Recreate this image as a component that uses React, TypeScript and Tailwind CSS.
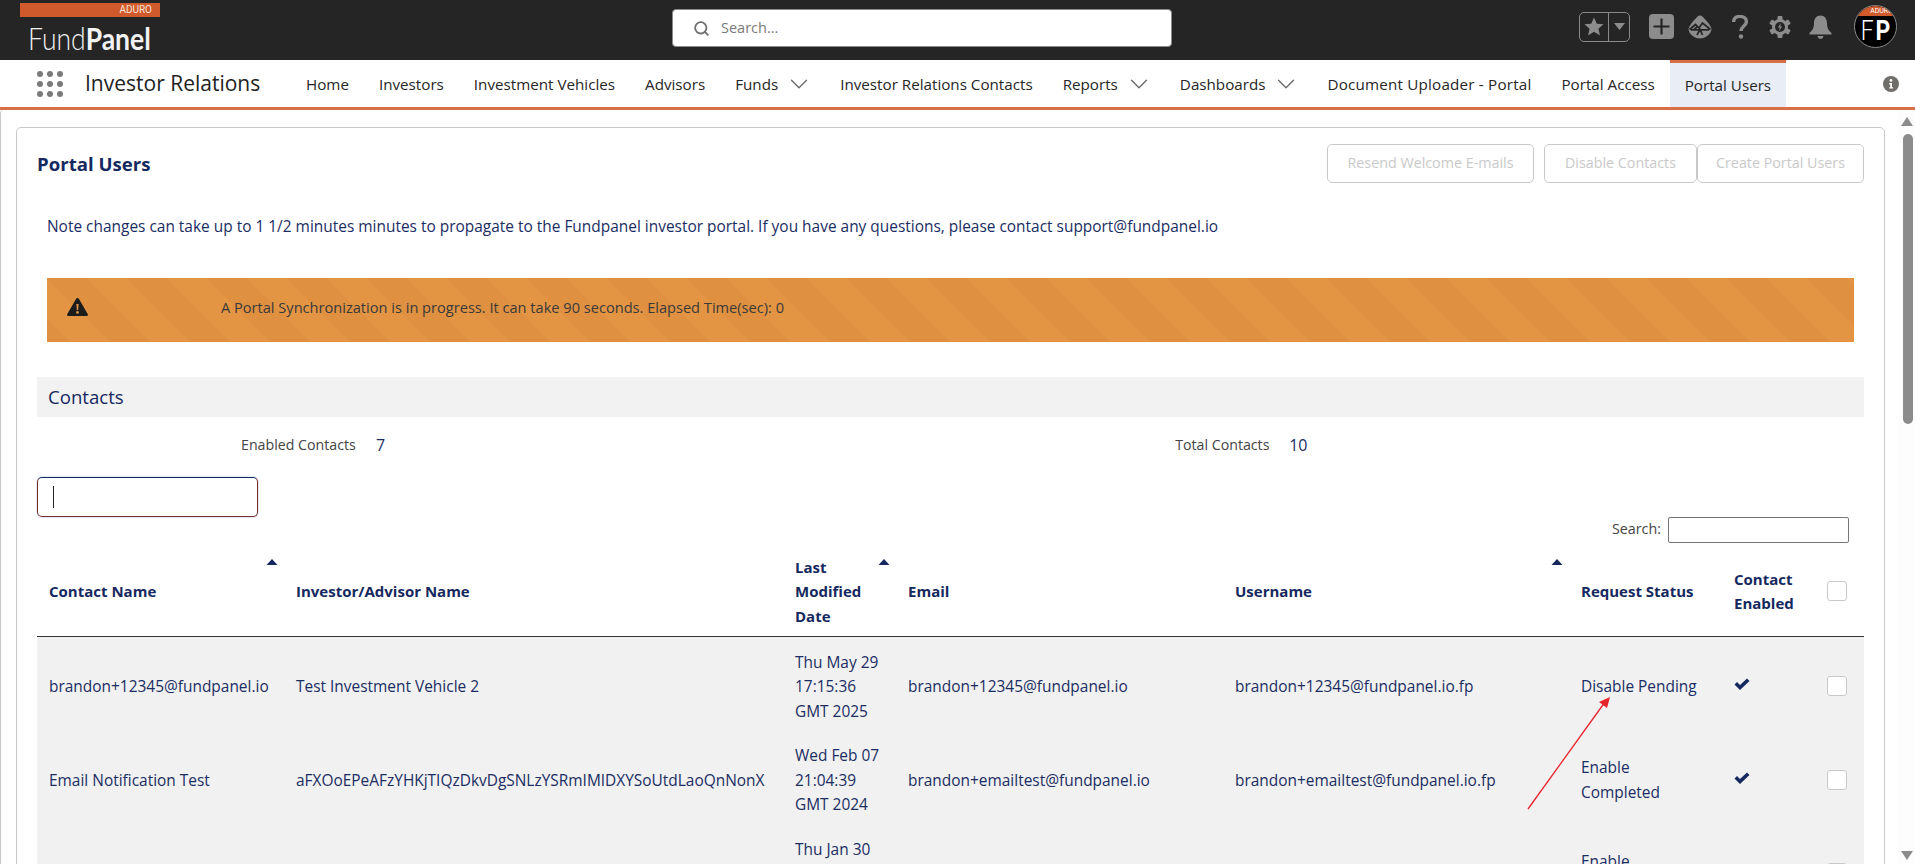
import React from 'react';
import { Search, ChevronDown } from 'lucide-react';

const navItems = [
    { label: 'Home' },
    { label: 'Investors' },
    { label: 'Investment Vehicles' },
    { label: 'Advisors' },
    { label: 'Funds', menu: true },
    { label: 'Investor Relations Contacts' },
    { label: 'Reports', menu: true },
    { label: 'Dashboards', menu: true },
    { label: 'Document Uploader - Portal', wide: true },
    { label: 'Portal Access' },
];

const rows = [
    {
        contact: 'brandon+12345@fundpanel.io',
        investor: 'Test Investment Vehicle 2',
        modified: ['Thu May 29', '17:15:36', 'GMT 2025'],
        email: 'brandon+12345@fundpanel.io',
        username: 'brandon+12345@fundpanel.io.fp',
        status: 'Disable Pending',
    },
    {
        contact: 'Email Notification Test',
        investor: 'aFXOoEPeAFzYHKjTIQzDkvDgSNLzYSRmIMIDXYSoUtdLaoQnNonX',
        modified: ['Wed Feb 07', '21:04:39', 'GMT 2024'],
        email: 'brandon+emailtest@fundpanel.io',
        username: 'brandon+emailtest@fundpanel.io.fp',
        status: 'Enable Completed',
    },
    {
        contact: 'Portal Test Contact',
        investor: 'Test Investment Vehicle 1',
        modified: ['Thu Jan 30', '15:22:10', 'GMT 2025'],
        email: 'brandon+portal@fundpanel.io',
        username: 'brandon+portal@fundpanel.io.fp',
        status: 'Enable Completed',
    },
];

const SortCaret = () => (
    <svg width="12" height="6" viewBox="0 0 12 6" className="absolute top-[14px] right-[6px] fill-[#16295f]">
        <path d="M6 0 L11.5 6 H0.5 Z" />
    </svg>
);

const CheckBox = () => <div className="w-5 h-5 bg-white border border-[#c9c9c9] rounded-[3px]" />;

const TopIcons = () => (
    <div className="flex items-center">
        <div className="flex w-[51px] h-[30px] border border-[#8a8a8a] rounded-[5px]">
            <div className="w-[29px] flex items-center justify-center border-r border-[#8a8a8a]">
                <svg width="20" height="19" viewBox="0 0 20 19" className="fill-[#8c8c8c]">
                    <path d="M10 0.5 L12.8 6.8 L19.5 7.3 L14.4 11.7 L16 18.4 L10 14.8 L4 18.4 L5.6 11.7 L0.5 7.3 L7.2 6.8 Z" />
                </svg>
            </div>
            <div className="flex-1 flex items-center justify-center">
                <svg width="11" height="7" viewBox="0 0 11 7" className="fill-[#8c8c8c]">
                    <path d="M0 0 H11 L5.5 7 Z" />
                </svg>
            </div>
        </div>
        <div className="ml-[19px] w-[25px] h-[25px] rounded-[4px] bg-[#8c8c8c] flex items-center justify-center">
            <svg width="17" height="17" viewBox="0 0 17 17" className="fill-[#252525]">
                <path d="M7.4 0.5 H9.6 V7.4 H16.5 V9.6 H9.6 V16.5 H7.4 V9.6 H0.5 V7.4 H7.4 Z" />
            </svg>
        </div>
        <svg width="24" height="24" viewBox="0 0 24 24" className="ml-[14px]">
            <path d="M12 0.5 C14 0.5 15 2 16 3.2 C18.5 5.8 22 9 23.5 13.5 C23.5 19 17.5 23.5 12 23.5 C6.5 23.5 0.5 19 0.5 13.5 C2 9 5.5 5.8 8 3.2 C9 2 10 0.5 12 0.5 Z" fill="#8c8c8c" />
            <path d="M1.5 14.5 L7.5 9.5 L11 13 L14.5 8 L22.5 14.5 M6 14.5 L9 12 M9 20 L12 14.5 L14.5 20 M3 14.8 H21" fill="none" stroke="#252525" strokeWidth="1.7" />
        </svg>
        <svg width="16" height="24" viewBox="0 0 16 24" className="ml-[20px]">
            <path d="M1.6 7 C1.6 3.4 4.2 1.4 8 1.4 C11.8 1.4 14.4 3.6 14.4 6.8 C14.4 11 9 11 9 16" fill="none" stroke="#8c8c8c" strokeWidth="3.4" />
            <circle cx="9" cy="21.5" r="2.2" fill="#8c8c8c" />
        </svg>
        <svg width="22" height="22" viewBox="0 0 22 22" className="ml-[21px]">
            <g fill="#8c8c8c">
                <rect x="8.5" y="0" width="5" height="22" rx="1" />
                <rect x="8.5" y="0" width="5" height="22" rx="1" transform="rotate(60 11 11)" />
                <rect x="8.5" y="0" width="5" height="22" rx="1" transform="rotate(120 11 11)" />
                <circle cx="11" cy="11" r="8" />
            </g>
            <circle cx="11" cy="11" r="5" fill="#252525" />
            <path d="M12 7 L8.8 11.6 H10.8 L10 15 L13.2 10.4 H11.2 Z" fill="#8c8c8c" />
        </svg>
        <svg width="23" height="24" viewBox="0 0 23 24" className="ml-[18px]">
            <path d="M11.5 0.5 C15.5 0.5 18 3.5 18 8 C18 13 19.5 15.5 22.5 18 V19.5 H0.5 V18 C3.5 15.5 5 13 5 8 C5 3.5 7.5 0.5 11.5 0.5 Z" fill="#8c8c8c" />
            <path d="M8.5 21 H14.5 C14 23 13 23.8 11.5 23.8 C10 23.8 9 23 8.5 21 Z" fill="#8c8c8c" />
        </svg>
        <div className="ml-[22px] w-[43px] h-[43px] rounded-full bg-black border border-[#8c8c8c] overflow-hidden flex flex-col">
            <div className="h-[10px] bg-[#d05a2b] flex items-center justify-end pr-[3px] text-[7px] leading-none text-white font-['Roboto',sans-serif]">ADURO</div>
            <div className="flex-1 flex items-center justify-center text-white text-[27px] leading-none font-['Roboto',sans-serif] origin-center scale-x-[.85]">
                <span className="font-light">F</span>
                <span className="ml-[2px] font-bold">P</span>
            </div>
        </div>
    </div>
);

const App: React.FC = () => {
    return (
        <div className="w-full h-screen overflow-hidden flex flex-col bg-white font-['Open_Sans',sans-serif] text-[15.45px] leading-[24.5px] text-[#1b2d63]">
            <header className="h-[60px] shrink-0 bg-[#252525] flex items-start">
                <div className="ml-5 mt-[3px] w-[140px] shrink-0">
                    <div className="h-[14px] bg-[#d05a2b] flex items-center justify-end pr-2 text-[10px] leading-none text-[#f6e3da] font-['Roboto',sans-serif]">ADURO</div>
                    <div className="ml-[8px] mt-[3px] text-[31px] leading-[36px] text-[#f2f2f2] font-['Lato',sans-serif] whitespace-nowrap origin-left scale-x-[.855]">
                        <span className="font-light">Fund</span>
                        <span className="font-bold">Panel</span>
                    </div>
                </div>
                <div className="ml-[512px] mt-[9px] w-[500px] h-[38px] bg-white rounded-[4px] border border-[#8c8c8c] flex items-center pl-[20px]">
                    <Search size={17} strokeWidth={2.6} className="text-[#6f6f6f]" />
                    <span className="ml-[11px] text-[14.5px] text-[#7a7a7a]">Search...</span>
                </div>
                <div className="ml-auto mr-[18px] mt-[5px]">
                    <TopIcons />
                </div>
            </header>

            <nav className="h-[50px] shrink-0 bg-white border-b-[3px] border-[#d86f45] flex items-stretch text-[15.2px] text-[#262626]">
                <div className="ml-[37px] w-[26px] shrink-0 grid grid-cols-3 gap-x-[4px] gap-y-[4px] content-center">
                    {Array.from({ length: 9 }).map((_, i) => (
                        <span key={i} className="w-[6px] h-[6px] rounded-full bg-[#7a7a7a]" />
                    ))}
                </div>
                <div className="ml-[22px] w-[206px] shrink-0 flex items-center text-[21px] text-[#222]">Investor Relations</div>
                {navItems.map((item) => (
                    <div key={item.label} className={`px-[15px] pt-[1px] flex items-center whitespace-nowrap ${item.wide ? 'tracking-[.2px]' : ''}`}>
                        {item.label}
                        {item.menu && <ChevronDown size={30} strokeWidth={1.1} className="ml-[6px] -mr-[4px] text-[#6b6b6b]" />}
                    </div>
                ))}
                <div className="px-[15px] flex items-center whitespace-nowrap bg-[#e9edf6] border-t-[3px] border-[#d86f45]">Portal Users</div>
                <div className="ml-auto mr-[16px] flex items-center">
                    <svg width="16" height="16" viewBox="0 0 16 16">
                        <circle cx="8" cy="8" r="8" fill="#706e6b" />
                        <circle cx="8" cy="4.4" r="1.4" fill="#fff" />
                        <path d="M6.3 7 H9 V11.2 H10 V12.6 H6.3 V11.2 H7.2 V8.4 H6.3 Z" fill="#fff" />
                    </svg>
                </div>
            </nav>

            <div className="flex-1 min-h-0 flex relative">
                <main className="flex-1 min-w-0 overflow-hidden border-l border-[#c9c9c9] rounded-tl-[4px] pt-[17px] pl-[15px] pr-[13px]">
                    <section className="border border-[#c9c9c9] rounded-[5px] px-[20px] pt-[16px] pb-6">
                        <div className="flex items-center justify-between">
                            <h1 className="pt-[2px] text-[18.6px] font-bold text-[#16295f]">Portal Users</h1>
                            <div className="flex text-[14.3px] text-[#c9c9c9]">
                                <button className="h-[39px] w-[207px] border border-[#c9c9c9] rounded-[5px] bg-white">Resend Welcome E-mails</button>
                                <button className="ml-[10px] h-[39px] w-[153px] border border-[#c9c9c9] rounded-[5px] bg-white">Disable Contacts</button>
                                <button className="h-[39px] w-[167px] border border-[#c9c9c9] rounded-[5px] bg-white">Create Portal Users</button>
                            </div>
                        </div>

                        <p className="mt-[31px] ml-[10px]">
                            Note changes can take up to 1 1/2 minutes minutes to propagate to the Fundpanel investor portal. If you have any questions, please contact support@fundpanel.io
                        </p>

                        <div className="mt-[39px] mx-[10px] h-[64px] flex items-center text-[#3a3a3a] bg-[#e49543] bg-[linear-gradient(45deg,rgba(0,0,0,.025)_25%,transparent_25%,transparent_50%,rgba(0,0,0,.025)_50%,rgba(0,0,0,.025)_75%,transparent_75%,transparent)] bg-[length:80px_80px]">
                            <svg width="21" height="18" viewBox="0 0 21 18" className="ml-[20px] -mt-[5px] shrink-0">
                                <path d="M10.5 0 C11.2 0 11.7 0.4 12 1 L20.7 16 C21.2 17 20.6 18 19.5 18 H1.5 C0.4 18 -0.2 17 0.3 16 L9 1 C9.3 0.4 9.8 0 10.5 0 Z" fill="#1c1c1c" />
                                <path d="M9.4 6 H11.6 L11.2 12 H9.8 Z" fill="#e49543" />
                                <circle cx="10.5" cy="14.4" r="1.3" fill="#e49543" />
                            </svg>
                            <span className="ml-[133px] -mt-[5px] text-[14.6px]">A Portal Synchronization is in progress. It can take 90 seconds. Elapsed Time(sec): 0</span>
                        </div>

                        <div className="mt-[35px] h-10 bg-[#f2f2f2] flex items-center pl-[11px] pt-[1px] text-[18.6px] text-[#16295f]">Contacts</div>

                        <div className="mt-[17px] h-6 flex items-center">
                            <div className="ml-[204px] w-[135px] text-[14.2px] text-[#444]">Enabled Contacts</div>
                            <div className="text-[16px]">7</div>
                            <div className="ml-[790px] w-[114px] text-[14.2px] text-[#444]">Total Contacts</div>
                            <div className="text-[16px]">10</div>
                        </div>

                        <div className="mt-[19px] w-[221px] h-10 rounded-[5px] border border-[#16295f] border-l-[#7a2a2a] border-r-[#7a2a2a] border-b-[#7a2a2a] flex items-center pl-[15px] shadow-[0_0_2px_#9db4dd]">
                            <span className="w-px h-[22px] bg-[#222]" />
                        </div>

                        <div className="h-[26px] flex items-center justify-end pr-[15px]">
                            <span className="text-[14.3px] text-[#444]">Search:</span>
                            <input className="ml-[7px] w-[181px] h-[26px] border border-[#767676] rounded-[2px] bg-white" />
                        </div>

                        <table className="mt-[2px] w-full table-fixed border-collapse">
                            <colgroup>
                                <col className="w-[247px]" />
                                <col className="w-[499px]" />
                                <col className="w-[113px]" />
                                <col className="w-[327px]" />
                                <col className="w-[346px]" />
                                <col className="w-[153px]" />
                                <col className="w-[93px]" />
                                <col className="w-[49px]" />
                            </colgroup>
                            <thead>
                                <tr className="border-b border-[#333] text-left text-[15px] text-[#16295f]">
                                    <th className="relative pl-3 pt-[10px] pb-[7.5px] font-bold">Contact Name<SortCaret /></th>
                                    <th className="pl-3 pt-[10px] pb-[7.5px] font-bold">Investor/Advisor Name</th>
                                    <th className="relative pl-3 pr-6 pt-[10px] pb-[7.5px] font-bold">Last Modified Date<SortCaret /></th>
                                    <th className="pl-3 pt-[10px] pb-[7.5px] font-bold">Email</th>
                                    <th className="relative pl-3 pt-[10px] pb-[7.5px] font-bold">Username<SortCaret /></th>
                                    <th className="pl-3 pt-[10px] pb-[7.5px] font-bold">Request Status</th>
                                    <th className="pl-3 pt-[10px] pb-[7.5px] font-bold">Contact Enabled</th>
                                    <th className="pl-3 pt-[10px] pb-[7.5px]"><CheckBox /></th>
                                </tr>
                            </thead>
                            <tbody>
                                {rows.map((row) => (
                                    <tr key={row.contact} className="bg-[#f1f1f1]">
                                        <td className="pl-3 pt-[13px] pb-[7px] whitespace-nowrap">{row.contact}</td>
                                        <td className="pl-3 pt-[13px] pb-[7px] whitespace-nowrap">{row.investor}</td>
                                        <td className="pl-3 pt-[13px] pb-[7px]">
                                            {row.modified.map((line) => (
                                                <div key={line}>{line}</div>
                                            ))}
                                        </td>
                                        <td className="pl-3 pt-[13px] pb-[7px] whitespace-nowrap">{row.email}</td>
                                        <td className="pl-3 pt-[13px] pb-[7px] whitespace-nowrap">{row.username}</td>
                                        <td className="pl-3 pr-[20px] pt-[13px] pb-[7px]">{row.status}</td>
                                        <td className="pl-3 pt-[13px] pb-[7px]">
                                            <svg width="16" height="12" viewBox="0 0 16 12" className="fill-[#16295f] -mt-1">
                                                <path d="M0.5 6.5 L3 4 L6 7 L13 0.5 L15.5 3 L6 12 Z" />
                                            </svg>
                                        </td>
                                        <td className="pl-3 pt-[13px] pb-[7px]"><CheckBox /></td>
                                    </tr>
                                ))}
                            </tbody>
                        </table>
                    </section>
                </main>

                <div className="w-[17px] shrink-0 bg-[#fdfdfd] flex flex-col items-center pt-[7px]">
                    <svg width="12" height="9" viewBox="0 0 12 9" className="fill-[#8c8c8c]"><path d="M6 0 L12 9 H0 Z" /></svg>
                    <div className="mt-[8px] ml-[2px] w-[10px] h-[290px] rounded-[5px] bg-[#8c8c8c]" />
                    <svg width="12" height="9" viewBox="0 0 12 9" className="mt-auto mb-[4px] fill-[#8c8c8c]"><path d="M0 0 H12 L6 9 Z" /></svg>
                </div>

                {/* red annotation arrow drawn on top of the screenshot */}
                <svg width="100" height="130" viewBox="0 0 100 130" className="absolute left-[1520px] top-[585px]">
                    <path d="M8 114 L85 7" fill="none" stroke="#e8242b" strokeWidth="1.3" />
                    <path d="M90 2 L87 13 L79 7 Z" fill="#e8242b" />
                </svg>
            </div>
        </div>
    );
};

export default App;
